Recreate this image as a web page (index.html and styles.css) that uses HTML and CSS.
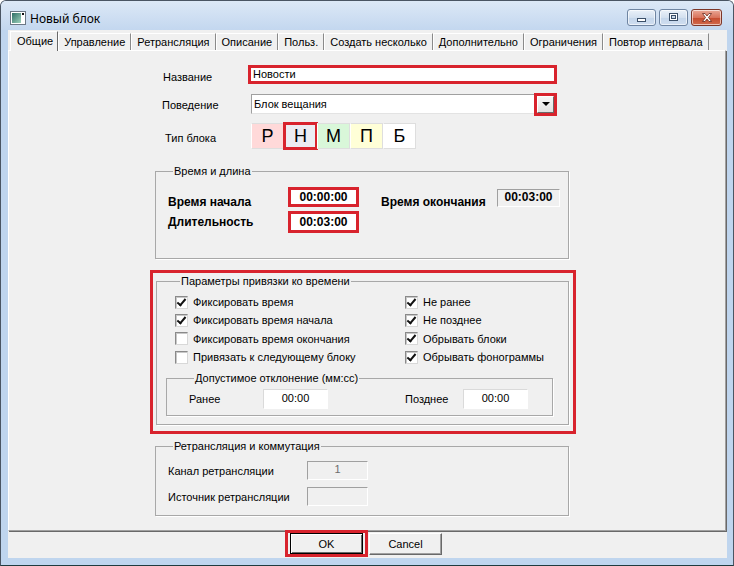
FILE: index.html
```html
<!DOCTYPE html>
<html lang="ru">
<head>
  <meta charset="UTF-8">
  <title>Новый блок</title>
  <link rel="stylesheet" href="styles.css">
</head>
<body>
  <div class="window">
    <div class="titlebar">
      <svg class="appIcon" width="16" height="14" viewBox="0 0 16 14">
        <defs>
          <linearGradient id="ig" x1="0" y1="0" x2="1" y2="1">
            <stop offset="0" stop-color="#2f6e66"/>
            <stop offset="1" stop-color="#9fd3bd"/>
          </linearGradient>
        </defs>
        <rect x="0.5" y="0.5" width="15" height="13" fill="#fff" stroke="#6b7785"/>
        <rect x="2" y="2" width="9" height="10" fill="url(#ig)"/>
        <rect x="12" y="2" width="2" height="2" fill="#111"/>
      </svg>
      <span class="title">Новый блок</span>
      <div class="capButtons">
        <span class="cap">
          <svg width="11" height="8" viewBox="0 0 11 8"><rect x="1.5" y="4.5" width="8" height="3" fill="#fff" stroke="#3b4f68"/></svg>
        </span>
        <span class="cap">
          <svg width="11" height="9" viewBox="0 0 11 9"><rect x="1.5" y="0.5" width="8" height="7" fill="#fff" stroke="#3b4f68"/><rect x="3.5" y="2.5" width="4" height="3" fill="#c9d8ea" stroke="#3b4f68"/></svg>
        </span>
        <span class="cap close">
          <svg width="14" height="11" viewBox="0 0 14 11"><path d="M2.5 1.5 L5 1.5 L7 4 L9 1.5 L11.5 1.5 L8.5 5.5 L11.5 9.5 L9 9.5 L7 7 L5 9.5 L2.5 9.5 L5.5 5.5 Z" fill="#fff" stroke="#6b2a1e" stroke-width="0.8"/></svg>
        </span>
      </div>
    </div>

    <div class="client">
      <div class="tabs">
        <span class="tab active">Общие</span>
        <span class="tab">Управление</span>
        <span class="tab">Ретрансляция</span>
        <span class="tab">Описание</span>
        <span class="tab">Польз.</span>
        <span class="tab">Создать несколько</span>
        <span class="tab">Дополнительно</span>
        <span class="tab">Ограничения</span>
        <span class="tab">Повтор интервала</span>
      </div>

      <div class="panel">
        <div class="form">
          <div class="row nameRow">
            <span class="label">Название</span>
            <div class="edit marked">Новости</div>
          </div>

          <div class="row comboRow">
            <span class="label">Поведение</span>
            <div class="combo">
              <span>Блок вещания</span>
              <span class="drop"><i></i></span>
            </div>
          </div>

          <div class="row typeRow">
            <span class="label">Тип блока</span>
            <div class="types">
              <span class="type tP">Р</span>
              <span class="type tN current">Н</span>
              <span class="type tM">М</span>
              <span class="type tY">П</span>
              <span class="type tB">Б</span>
            </div>
          </div>

          <fieldset class="group timeGroup">
            <legend>Время и длина</legend>
            <div class="timeRow first">
              <span class="bold tLabel">Время начала</span>
              <span class="tField marked">00:00:00</span>
              <span class="bold tLabel endLabel">Время окончания</span>
              <span class="tField sunken">00:03:00</span>
            </div>
            <div class="timeRow second">
              <span class="bold tLabel">Длительность</span>
              <span class="tField marked">00:03:00</span>
            </div>
          </fieldset>

          <div class="markedGroup">
            <fieldset class="group bindGroup">
              <legend>Параметры привязки ко времени</legend>
              <div class="checks">
                <label class="check"><span class="box on"></span>Фиксировать время</label>
                <label class="check"><span class="box on"></span>Не ранее</label>
                <label class="check"><span class="box on"></span>Фиксировать время начала</label>
                <label class="check"><span class="box on"></span>Не позднее</label>
                <label class="check"><span class="box"></span>Фиксировать время окончания</label>
                <label class="check"><span class="box on"></span>Обрывать блоки</label>
                <label class="check"><span class="box"></span>Привязать к следующему блоку</label>
                <label class="check"><span class="box on"></span>Обрывать фонограммы</label>
              </div>
              <fieldset class="group devGroup">
                <legend>Допустимое отклонение (мм:сс)</legend>
                <div class="devRow">
                  <span class="devLabel">Ранее</span>
                  <span class="devField">00:00</span>
                  <span class="devLabel late">Позднее</span>
                  <span class="devField">00:00</span>
                </div>
              </fieldset>
            </fieldset>
          </div>

          <fieldset class="group relayGroup">
            <legend>Ретрансляция и коммутация</legend>
            <div class="relayRow">
              <span class="relayLabel">Канал ретрансляции</span>
              <span class="relayField">1</span>
            </div>
            <div class="relayRow">
              <span class="relayLabel">Источник ретрансляции</span>
              <span class="relayField"></span>
            </div>
          </fieldset>
        </div>
      </div>

      <div class="footer">
        <span class="okMark"><button class="btn default">OK</button></span>
        <button class="btn cancel">Cancel</button>
      </div>
    </div>
  </div>
</body>
</html>
```

FILE: styles.css
```css
* {
    box-sizing: border-box;
}
body {
    margin: 0;
    background: #fff;
    font-family: "Liberation Sans", Arial, sans-serif;
    font-size: 11px;
    color: #000;
}
.window {
    width: 734px;
    height: 566px;
    border: 1px solid #4a5563;
    border-bottom-color: #1f3b3e;
    border-radius: 6px 6px 0 0;
    background: #bfd5ee;
    display: flex;
    flex-direction: column;
    overflow: hidden;
}

/* title bar */
.titlebar {
    height: 29px;
    display: flex;
    align-items: center;
    padding: 5px 11px 0 9px;
    background: linear-gradient(#dce8f6, #c3d7ef);
}
.appIcon {
    display: block;
}
.title {
    margin-left: 4px;
    font-family: "Noto Sans", "Open Sans", sans-serif;
    font-size: 12px;
    color: #000;
}
.capButtons {
    margin-left: auto;
    align-self: flex-start;
    margin-top: 3px;
    display: flex;
    gap: 3px;
}
.cap {
    width: 29px;
    height: 17px;
    border: 1px solid #6f85a2;
    border-radius: 3px;
    background: linear-gradient(#eaf1f9, #d3e0ef 50%, #c3d5ea 51%, #d0def0);
    display: flex;
    align-items: center;
    justify-content: center;
    box-shadow: inset 0 0 0 1px rgba(255, 255, 255, 0.6);
}
.cap.close {
    width: 31px;
    border-color: #7d3628;
    background: linear-gradient(#eaa897, #d8735c 50%, #c54a2e 51%, #d16a4c);
}

/* client area */
.client {
    margin: 0 6px 7px 7px;
    height: 528px;
    background: #f0f0f0;
}
.tabs {
    height: 20px;
    display: flex;
    align-items: flex-end;
    padding-left: 2px;
}
.tab {
    height: 17px;
    line-height: 16px;
    padding: 0 5px;
    border-left: 1px solid #fff;
    border-top: 1px solid #fff;
    border-right: 1px solid #8a8a8a;
    white-space: nowrap;
}
.tab.active {
    position: relative;
    z-index: 1;
    height: 20px;
    line-height: 18px;
    margin-bottom: -1px;
    padding: 0 4px 0 6px;
    background: #f0f0f0;
    border-right-color: #696969;
}
.panel {
    height: 481px;
    margin-right: 1px;
    border: 1px solid;
    border-color: #fff #a0a0a0 #a0a0a0 #fff;
    box-shadow: 1px 1px 0 #696969;
}
.form {
    padding: 14px 0 0 146px;
}
.row {
    display: flex;
    align-items: center;
}
.label {
    flex: none;
}
.nameRow {
    height: 19px;
}
.nameRow .label {
    width: 93px;
    padding: 5px 0 0 8px;
}
.marked {
    border: 3px solid #d8232d;
}
.edit {
    width: 309px;
    height: 19px;
    background: #fff;
    padding-left: 2px;
    line-height: 13px;
}
.comboRow {
    height: 20px;
    margin-top: 10px;
}
.comboRow .label {
    width: 96px;
    padding: 2px 0 0 7px;
}
.combo {
    width: 304px;
    height: 20px;
    display: flex;
    align-items: center;
    padding-left: 2px;
    background: #fff;
    border: 1px solid;
    border-color: #a0a0a0 #e3e3e3 #e3e3e3 #a0a0a0;
}
.drop {
    margin-left: auto;
    width: 17px;
    height: 17px;
    display: flex;
    align-items: center;
    justify-content: center;
    background: linear-gradient(#f7f7f7, #e1e1e1);
    border: 1px solid;
    border-color: #fff #696969 #696969 #fff;
    outline: 3px solid #d8232d;
}
.drop i {
    width: 0;
    height: 0;
    border-left: 4px solid transparent;
    border-right: 4px solid transparent;
    border-top: 4px solid #000;
}
.typeRow {
    height: 26px;
    margin-top: 9px;
}
.typeRow .label {
    width: 96px;
    padding: 3px 0 0 10px;
}
.types {
    display: flex;
}
.type {
    width: 33px;
    height: 26px;
    border: 1px solid #dedede;
    border-left-color: #fff;
    font-size: 18px;
    line-height: 24px;
    text-align: center;
}
.tP { background: #ffd9d9; }
.tN { background: #ececf2; }
.tM { background: #d9f7d9; }
.tY { background: #ffffd7; }
.tB { background: #fff; }
.type.current {
    outline: 3px solid #d8232d;
    outline-offset: -2px;
}

/* group boxes */
.group {
    margin: 0;
    padding: 0;
    min-width: 0;
    border: 1px solid #a8a8a8;
    box-shadow: 1px 1px 0 #fff;
}
.group legend {
    margin-left: 5px;
    padding: 0 1px;
    line-height: 13px;
}
.timeGroup {
    width: 414px;
    margin-top: 16px;
    padding: 9px 0 25px 12px;
}
.timeRow {
    display: flex;
    align-items: flex-start;
}
.timeRow.first {
    height: 20px;
}
.timeRow.second {
    height: 22px;
    margin-top: 4px;
    align-items: center;
}
.bold {
    font-weight: bold;
    font-size: 12px;
    line-height: 14px;
}
.tLabel {
    width: 120px;
}
.first .tLabel {
    margin-top: 8px;
}
.endLabel {
    width: 116px;
    margin-left: 22px;
}
.tField {
    width: 71px;
    height: 20px;
    background: #fff;
    text-align: center;
    font-weight: bold;
    font-size: 12px;
    line-height: 14px;
}
.second .tField {
    height: 22px;
    line-height: 16px;
}
.tField.sunken {
    width: 63px;
    height: 18px;
    margin-top: 2px;
    background: #f0f0f0;
    border: 1px solid;
    border-color: #a0a0a0 #fff #fff #a0a0a0;
    line-height: 15px;
}
.markedGroup {
    width: 426px;
    margin: 11px 0 0 -5px;
    padding: 2px 4px 6px 3px;
    border: 3px solid #d8232d;
}
.bindGroup {
    padding: 5px 0 8px 18px;
}
.checks {
    display: grid;
    grid-template-columns: 230px 1fr;
    grid-auto-rows: 18.3px;
}
.check {
    display: flex;
    align-items: center;
}
.box {
    width: 13px;
    height: 13px;
    margin-right: 5px;
    background: #fff;
    border: 1px solid;
    border-color: #8a8a8a #d8d8d8 #d8d8d8 #8a8a8a;
    box-shadow: inset 1px 1px 0 #c8c8c8;
    position: relative;
}
.box.on::after {
    content: "";
    position: absolute;
    left: 3px;
    top: 0px;
    width: 3px;
    height: 7px;
    border-right: 2px solid #111;
    border-bottom: 2px solid #111;
    transform: rotate(40deg);
}
.devGroup {
    width: 387px;
    margin: 6px 0 0 -9px;
    padding: 4px 0 6px 22px;
}
.devRow {
    display: flex;
    align-items: center;
    height: 20px;
}
.devLabel {
    width: 74px;
}
.devLabel.late {
    width: 58px;
    margin-left: 77px;
}
.devField {
    width: 65px;
    height: 20px;
    background: #fff;
    border: 1px solid;
    border-color: #dadada #fff #fff #dadada;
    text-align: center;
    line-height: 17px;
}
.relayGroup {
    width: 414px;
    margin-top: 6px;
    padding: 8px 0 9px 12px;
}
.relayRow {
    display: flex;
    align-items: center;
    height: 19px;
}
.relayRow + .relayRow {
    margin-top: 7px;
}
.relayLabel {
    width: 139px;
}
.relayField {
    width: 61px;
    height: 19px;
    border: 1px solid;
    border-color: #a0a0a0 #fff #fff #a0a0a0;
    color: #6d6d6d;
    text-align: center;
    line-height: 15px;
}

/* buttons */
.footer {
    display: flex;
    align-items: flex-start;
    padding-left: 277px;
}
.okMark {
    margin-top: -1px;
    padding: 0 2px;
    border: 3px solid #d8232d;
    display: flex;
}
.btn {
    width: 73px;
    height: 21px;
    padding: 0;
    font: inherit;
    color: #000;
    background: #f0f0f0;
    border: 1px solid;
    border-color: #fff #696969 #696969 #fff;
    box-shadow: inset -1px -1px 0 #a0a0a0;
}
.btn.default {
    border-color: #000;
    box-shadow: inset 1px 1px 0 #fff, inset -1px -1px 0 #696969;
}
.btn.cancel {
    height: 22px;
    margin: 2px 0 0 1px;
}
```
